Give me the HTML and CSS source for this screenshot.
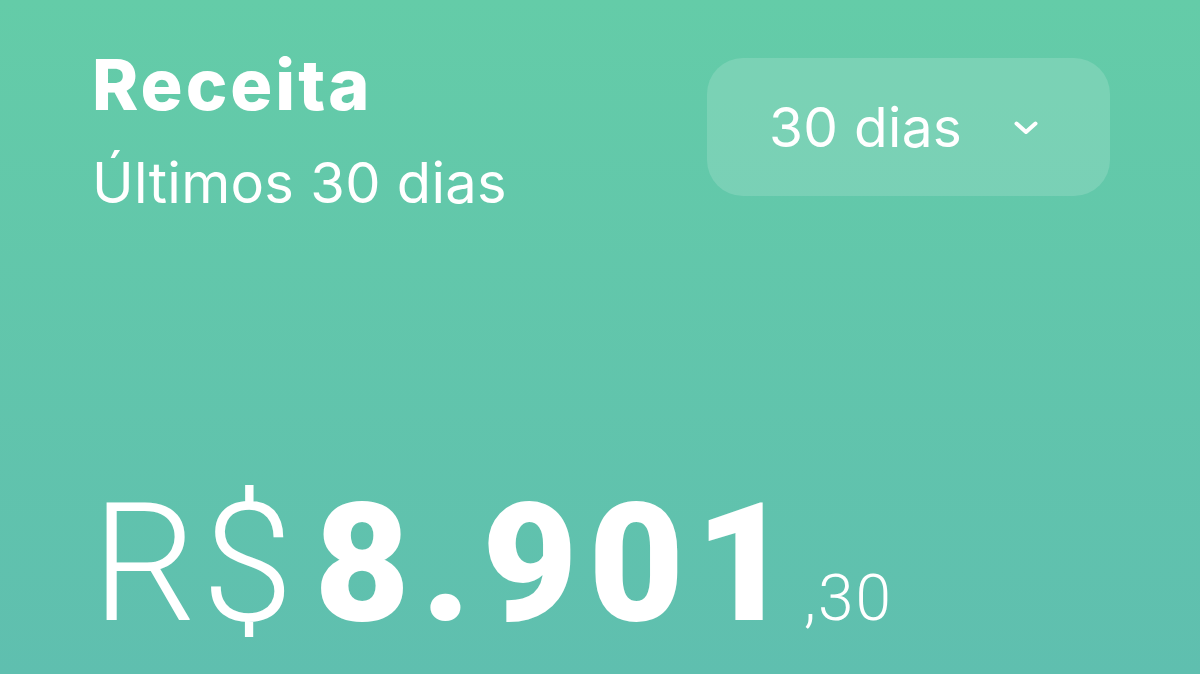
FILE: index.html
```html
<!DOCTYPE html>
<html lang="pt-BR">
<head>
    <meta charset="UTF-8">
    <meta name="viewport" content="width=device-width, initial-scale=1.0">
    <title>Receita</title>
    <link rel="stylesheet" href="styles.css">
</head>
<body>
    <div class="card">
        <div class="header">
            <div class="titles">
                <div class="title">Receita</div>
                <div class="subtitle">Últimos 30 dias</div>
            </div>
            <button class="period">
                <span>30 dias</span>
                <svg class="chevron" viewBox="0 0 24 14" width="24" height="14">
                    <path d="M2.5 2.5 L12 11 L21.5 2.5" fill="none" stroke="#fff" stroke-width="4" stroke-linecap="round" stroke-linejoin="round"/>
                </svg>
            </button>
        </div>
        <div class="amount">
            <span class="currency">R$</span><span class="whole">8.901</span><span class="cents">,30</span>
        </div>
    </div>
</body>
</html>
```

FILE: styles.css
```css
html, body {
    margin: 0;
    height: 100%;
}
body {
    background: linear-gradient(180deg, #64cca8 0%, #5fbfaf 100%);
    font-family: Inter, "Noto Sans", sans-serif;
    color: #fff;
    overflow: hidden;
}
.card {
    height: 100%;
    box-sizing: border-box;
    padding: 46px 90px 0 92px;
    display: flex;
    flex-direction: column;
}
.header {
    display: flex;
    justify-content: space-between;
    align-items: flex-start;
}
.title {
    font-size: 70px;
    font-weight: 800;
    line-height: 78px;
    letter-spacing: 3px;
}
.subtitle {
    font-size: 56px;
    font-weight: 400;
    line-height: 64px;
    letter-spacing: 0.3px;
    margin-top: 27px;
}
.period {
    margin-top: 12px;
    width: 403px;
    height: 138px;
    border: none;
    border-radius: 36px;
    background-color: rgba(255, 255, 255, 0.15);
    color: #fff;
    font-family: Inter, "Noto Sans", sans-serif;
    font-size: 55px;
    font-weight: 400;
    letter-spacing: 0.3px;
    display: flex;
    align-items: center;
    justify-content: space-between;
    padding: 0 72px 0 62px;
}
.chevron {
    display: block;
    margin-top: 2px;
}
.amount {
    margin-top: auto;
    margin-bottom: 28px;
    display: flex;
    align-items: baseline;
    line-height: 1;
    font-family: Roboto, "Liberation Sans", sans-serif;
    white-space: nowrap;
}
.currency {
    font-size: 165px;
    font-weight: 300;
    letter-spacing: 5px;
}
.whole {
    font-size: 165px;
    font-weight: 900;
    letter-spacing: 11px;
    margin-left: 16px;
}
.cents {
    font-size: 64px;
    font-weight: 300;
    letter-spacing: 2px;
    margin-left: 2px;
}
```
